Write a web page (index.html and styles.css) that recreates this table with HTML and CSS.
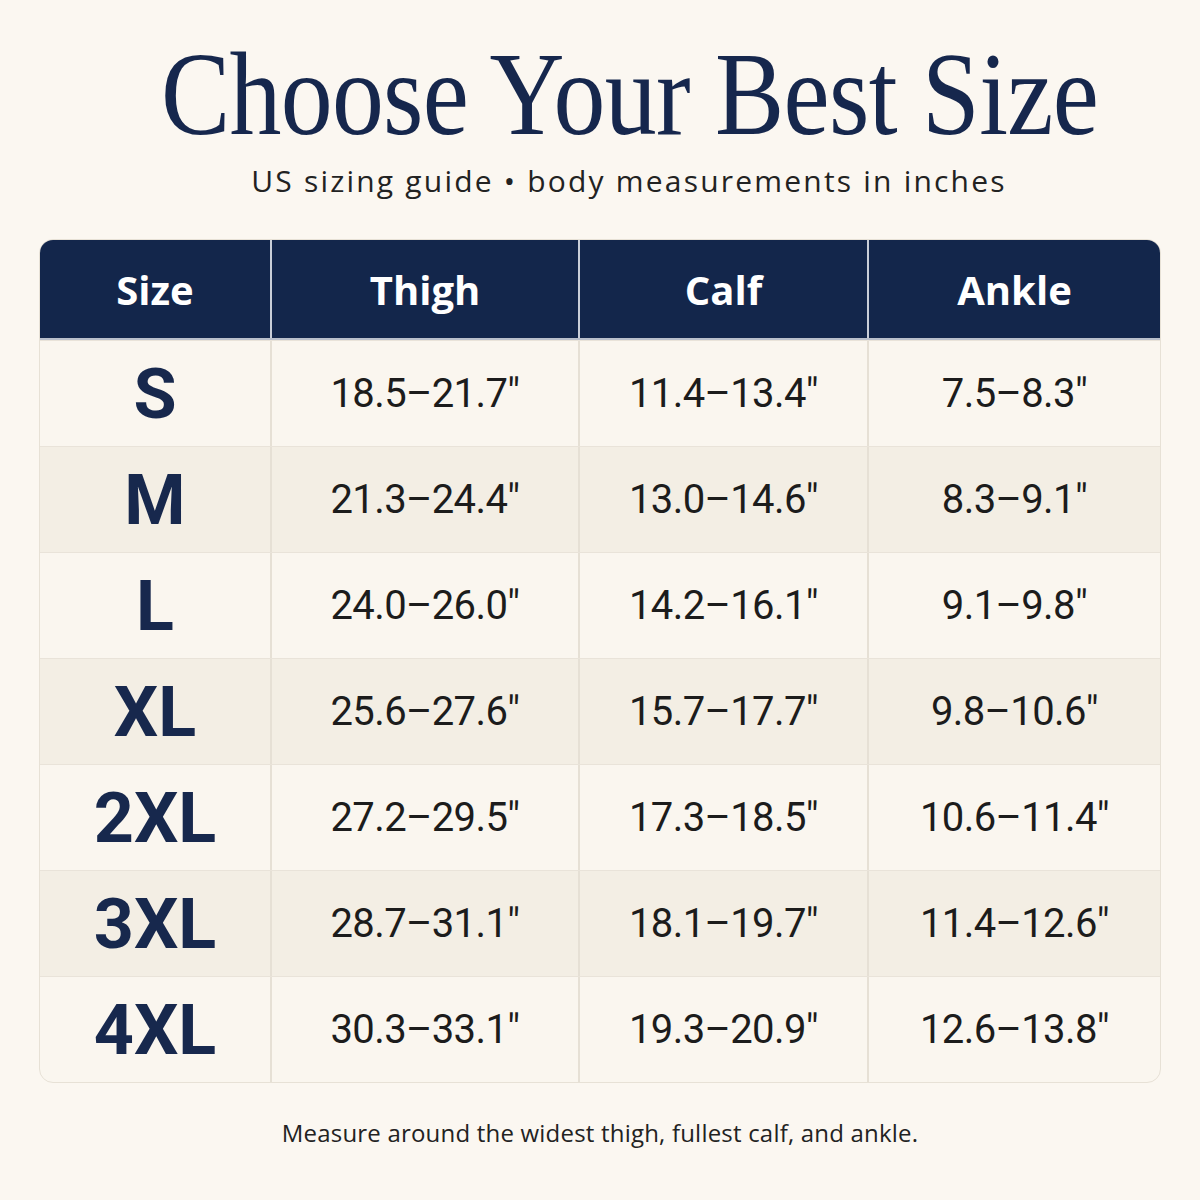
FILE: index.html
```html
<!DOCTYPE html>
<html lang="en">
<head>
<meta charset="utf-8">
<title>Choose Your Best Size</title>
<link rel="stylesheet" href="styles.css">
</head>
<body>
<main class="page">
  <header class="intro">
    <h1 class="title">Choose Your Best Size</h1>
    <p class="subtitle">US sizing guide • body measurements in inches</p>
  </header>
  <div class="table">
    <div class="row head">
      <div class="cell">Size</div>
      <div class="cell">Thigh</div>
      <div class="cell">Calf</div>
      <div class="cell">Ankle</div>
    </div>
    <div class="row">
      <div class="cell size">S</div>
      <div class="cell">18.5–21.7″</div>
      <div class="cell">11.4–13.4″</div>
      <div class="cell">7.5–8.3″</div>
    </div>
    <div class="row alt">
      <div class="cell size">M</div>
      <div class="cell">21.3–24.4″</div>
      <div class="cell">13.0–14.6″</div>
      <div class="cell">8.3–9.1″</div>
    </div>
    <div class="row">
      <div class="cell size">L</div>
      <div class="cell">24.0–26.0″</div>
      <div class="cell">14.2–16.1″</div>
      <div class="cell">9.1–9.8″</div>
    </div>
    <div class="row alt">
      <div class="cell size">XL</div>
      <div class="cell">25.6–27.6″</div>
      <div class="cell">15.7–17.7″</div>
      <div class="cell">9.8–10.6″</div>
    </div>
    <div class="row">
      <div class="cell size">2XL</div>
      <div class="cell">27.2–29.5″</div>
      <div class="cell">17.3–18.5″</div>
      <div class="cell">10.6–11.4″</div>
    </div>
    <div class="row alt">
      <div class="cell size">3XL</div>
      <div class="cell">28.7–31.1″</div>
      <div class="cell">18.1–19.7″</div>
      <div class="cell">11.4–12.6″</div>
    </div>
    <div class="row">
      <div class="cell size">4XL</div>
      <div class="cell">30.3–33.1″</div>
      <div class="cell">19.3–20.9″</div>
      <div class="cell">12.6–13.8″</div>
    </div>
  </div>
  <p class="note">Measure around the widest thigh, fullest calf, and ankle.</p>
</main>
</body>
</html>
```

FILE: styles.css
```css
html, body {
  margin: 0;
  padding: 0;
  background: #fbf7f1;
}
.page {
  width: 1200px;
  height: 1200px;
  box-sizing: border-box;
  padding: 30px 40px 0 40px;
  display: flex;
  flex-direction: column;
  align-items: center;
}
.intro {
  display: flex;
  flex-direction: column;
  align-items: center;
  padding-left: 58px;
}
.title {
  margin: 0;
  font-family: "Liberation Serif", serif;
  font-weight: 400;
  font-size: 118px;
  line-height: 130px;
  letter-spacing: -0.8px;
  color: #16274d;
  transform: scaleX(0.88);
  white-space: nowrap;
}
.subtitle {
  margin: 3px 0 0 0;
  font-family: "Open Sans", sans-serif;
  font-size: 30px;
  line-height: 36px;
  letter-spacing: 2.2px;
  color: #222;
  white-space: nowrap;
}
.table {
  margin-top: 40px;
  width: 1120px;
  border: 1px solid #e7e1d6;
  border-radius: 14px;
  overflow: hidden;
  background: #faf6ef;
}
.row {
  display: grid;
  grid-template-columns: 230px 308px 289px 1fr;
  height: 106px;
  box-sizing: border-box;
  border-top: 1px solid #e9e3d9;
}
.row.alt {
  background: #f3eee4;
}
.row.head {
  height: 100px;
  border-top: none;
  background: #13264b;
  border-bottom: 2px solid #b9bfcb;
}
.cell {
  display: flex;
  align-items: center;
  justify-content: center;
  border-left: 2px solid #e6e0d5;
  font-family: "Roboto", sans-serif;
  font-size: 40px;
  letter-spacing: -0.6px;
  color: #1c1c1c;
}
.cell:first-child {
  border-left: none;
}
.head .cell {
  border-left: 2px solid #c9ced8;
  font-family: "Open Sans", sans-serif;
  font-weight: 700;
  font-size: 40px;
  letter-spacing: 0;
  color: #ffffff;
}
.head .cell:first-child {
  border-left: none;
}
.cell.size {
  font-family: "Roboto", sans-serif;
  font-weight: 700;
  font-size: 70px;
  letter-spacing: 0;
  color: #17284d;
}
.note {
  margin: 33px 0 0 0;
  font-family: "Open Sans", sans-serif;
  font-size: 24px;
  letter-spacing: 0.2px;
  color: #222;
}
```
